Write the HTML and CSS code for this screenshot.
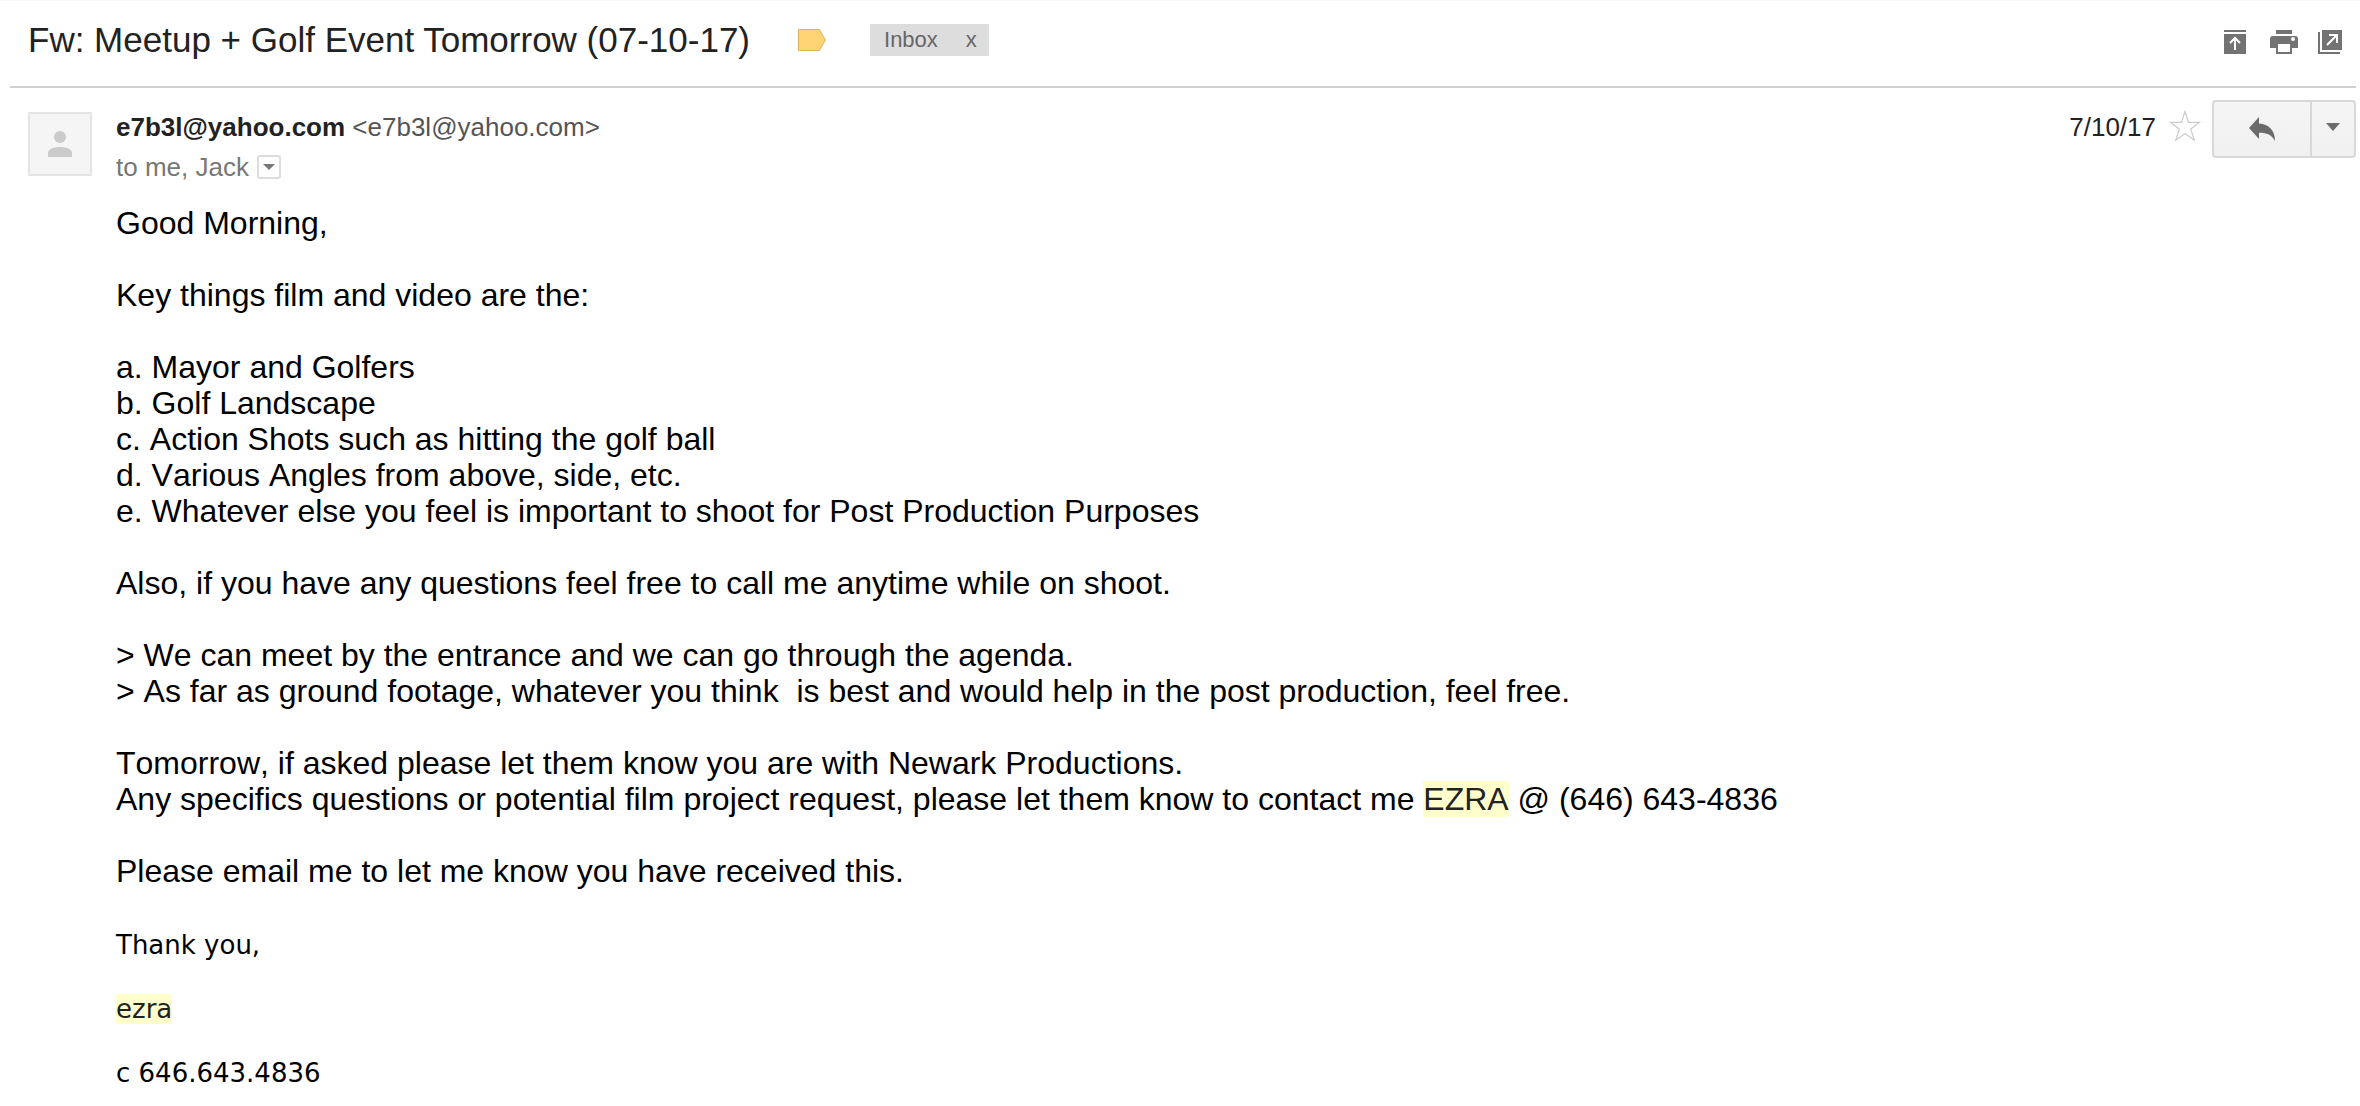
FILE: index.html
```html
<!DOCTYPE html>
<html lang="en">
<head>
<meta charset="utf-8">
<meta name="viewport" content="width=device-width, initial-scale=1">
<title>Fw: Meetup + Golf Event Tomorrow (07-10-17)</title>
<link rel="stylesheet" href="styles.css">
</head>
<body>
<header class="subject-bar">
  <h1 class="subject">Fw: Meetup + Golf Event Tomorrow (07-10-17)</h1>
  <button class="plain importance" type="button" aria-label="Important">
    <svg width="28" height="22" viewBox="0 0 28 22"><path d="M.5.5H21.500L27.400 11 21.500 21.500H.5z" fill="#ffd373" stroke="#dcb55a"/></svg>
  </button>
  <div class="label-chip">
    <a class="label-name" href="#inbox">Inbox</a>
    <button class="plain label-remove" type="button" aria-label="Remove label Inbox">x</button>
  </div>
  <nav class="tools">
    <button class="plain" type="button" aria-label="Expand all">
      <svg width="26" height="24" viewBox="0 0 26 24"><path fill="#737373" d="M0 0h22v2H0zM0 4h22v20H0z"/><path d="M11 20V8M6 13l5-5 5 5" fill="none" stroke="#fff" stroke-width="2"/></svg>
    </button>
    <button class="plain" type="button" aria-label="Print">
      <svg width="28" height="24" viewBox="0 0 28 24"><path fill="#737373" d="M6 0h16v4H6zM3 6h22q3 0 3 3v9h-6v6H6v-6H0V9q0-3 3-3z"/><path fill="#fff" d="M8 14h12v8H8z"/><circle cx="23" cy="9" r="2" fill="#fff"/></svg>
    </button>
    <button class="plain" type="button" aria-label="Open in new window">
      <svg width="24" height="24" viewBox="0 0 24 24"><path fill="#737373" d="M4 0h20v20H4zM0 2h2v20h20v2H0z"/><path d="M9 15 19 5M11 5h8v8" fill="none" stroke="#fff" stroke-width="2"/></svg>
    </button>
  </nav>
</header>
<main class="message">
  <div class="avatar">
    <svg width="24" height="26" viewBox="0 0 24 26"><circle cx="12" cy="6" r="6" fill="#cbcbcb"/><path fill="#cbcbcb" d="M0 26v-4c0-4 6-6 12-6s12 2 12 6v4z"/></svg>
  </div>
  <div class="content">
    <div class="meta">
      <div class="people">
        <div class="sender"><strong>e7b3l@yahoo.com</strong> <span class="address">&lt;e7b3l@yahoo.com&gt;</span></div>
        <div class="recipients">to me, Jack
          <button class="details" type="button" aria-label="Show details"><svg width="12" height="6" viewBox="0 0 12 6"><path d="M0 0h12L6 6z" fill="#777"/></svg></button>
        </div>
      </div>
      <div class="actions">
        <time class="date" datetime="2017-07-10">7/10/17</time>
        <button class="plain star" type="button" aria-label="Star">
          <svg width="32" height="32" viewBox="0 0 32 32"><path d="M16 1.500 19.500 12.300H30.500L21.700 19 25.300 30.300 16 23.500 6.700 30.300 10.300 19 1.500 12.300H12.500z" fill="#fff" stroke="#ccc" stroke-width="1.200"/></svg>
        </button>
        <div class="reply-group">
          <button class="reply" type="button" aria-label="Reply"><svg width="26" height="24" viewBox="0 0 26 24"><path d="M10 0v6.500C20 7.500 26 13 26 24 23 18 18 15.800 10 15.800V22L0 11z" fill="#6b6b6b"/></svg></button>
          <button class="more" type="button" aria-label="More"><svg width="14" height="8" viewBox="0 0 14 8"><path d="M0 0h14L7 8z" fill="#6b6b6b"/></svg></button>
        </div>
      </div>
    </div>
    <article class="body">
      <p>Good Morning,</p>
      <p>Key things film and video are the:</p>
      <p>a. Mayor and Golfers<br>b. Golf Landscape<br>c. Action Shots such as hitting the golf ball<br>d. Various Angles from above, side, etc.<br>e. Whatever else you feel is important to shoot for Post Production Purposes</p>
      <p>Also, if you have any questions feel free to call me anytime while on shoot.</p>
      <p>&gt; We can meet by the entrance and we can go through the agenda.<br>&gt; As far as ground footage, whatever you think&nbsp; is best and would help in the post production, feel free.</p>
      <p>Tomorrow, if asked please let them know you are with Newark Productions.<br>Any specifics questions or potential film project request, please let them know to contact me <mark>EZRA</mark> @ (646) 643-4836</p>
      <p>Please email me to let me know you have received this.</p>
      <div class="signature">
        <p>Thank you,</p>
        <p><mark>ezra</mark></p>
        <p>c 646.643.4836</p>
      </div>
    </article>
  </div>
</main>
</body>
</html>
```
FILE: styles.css
```css
* {
  box-sizing: border-box;
}

body {
  margin: 0;
  padding: 0 4px 0 10px;
  border-top: 1px solid #f7f7f7;
  background: #fff;
  color: #222;
  font-family: "Liberation Sans", Arial, sans-serif;
  font-size: 26px;
  line-height: 40px;
}

svg {
  display: block;
}

button {
  font: inherit;
  cursor: pointer;
}

.plain {
  padding: 0;
  border: 0;
  background: none;
  color: inherit;
}

.subject-bar {
  display: flex;
  align-items: center;
  height: 87px;
  padding: 0 14px 8px 18px;
  border-bottom: 2px solid #d0d0d0;
}

.subject {
  margin: 0;
  font-size: 35px;
  font-weight: 400;
}

.importance {
  margin: 0 44px 0 48px;
}

.label-chip {
  display: flex;
  align-items: center;
  gap: 28px;
  height: 32px;
  padding: 0 12px 0 14px;
  background: #ddd;
  color: #666;
  font-size: 22px;
  line-height: 32px;
}

.label-name {
  color: inherit;
  text-decoration: none;
}

.label-remove {
  line-height: 32px;
}

.tools {
  display: flex;
  gap: 20px;
  margin-left: auto;
  padding-top: 4px;
}

.message {
  display: flex;
  gap: 24px;
  padding: 12px 0 12px 18px;
}

.avatar {
  display: flex;
  flex: none;
  align-items: center;
  justify-content: center;
  width: 64px;
  height: 64px;
  margin-top: 12px;
  border: 2px solid #e5e5e5;
  background: #f5f5f5;
}

.content {
  flex: 1;
}

.meta {
  display: flex;
  justify-content: space-between;
}

.people {
  padding-top: 7px;
}

.address {
  color: #555;
}

.recipients {
  display: flex;
  align-items: center;
  gap: 8px;
  color: #777;
}

.details {
  display: flex;
  align-items: center;
  justify-content: center;
  width: 24px;
  height: 24px;
  padding: 0;
  border: 2px solid #ddd;
  border-radius: 3px;
  background: #fff;
}

.actions {
  display: flex;
  align-items: flex-start;
}

.date {
  padding-top: 7px;
}

.star {
  margin: 10px 11px 0 13px;
}

.reply-group {
  display: flex;
  height: 58px;
  border: 2px solid #d8d8d8;
  border-radius: 4px;
  background: linear-gradient(#f5f5f5, #f0f0f0);
}

.reply,
.more {
  display: flex;
  align-items: center;
  justify-content: center;
  padding: 0;
  border: 0;
  background: none;
}

.reply {
  width: 98px;
  border-right: 2px solid #d8d8d8;
}

.more {
  width: 42px;
  padding-bottom: 4px;
}

.body {
  padding-top: 18px;
  color: #000;
  font-family: "Liberation Sans", Helvetica, sans-serif;
  font-size: 32px;
  font-kerning: none;
  line-height: 36px;
}

.body p {
  margin: 0 0 36px;
}

mark {
  background: #ffffcc;
  color: #222;
}

.signature {
  padding-top: 4px;
  font-family: "DejaVu Sans", Verdana, sans-serif;
  font-size: 26px;
  line-height: 32px;
}

.body .signature p {
  margin: 0 0 32px;
}
```
